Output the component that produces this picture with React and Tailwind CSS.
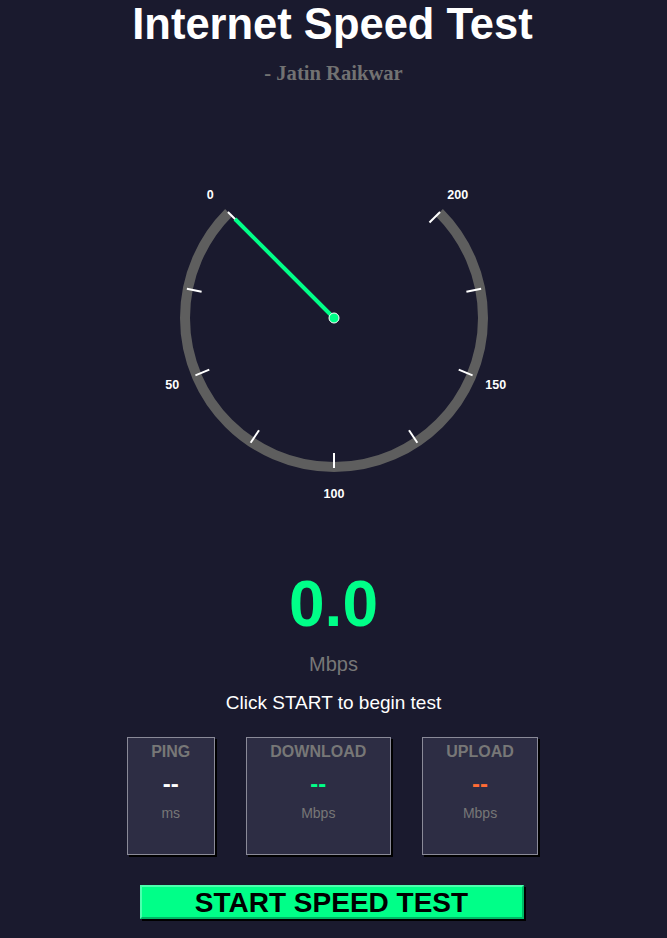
import React from "react";

const CX = 200;
const CY = 200;

function pt(r, deg) {
  const a = (deg * Math.PI) / 180;
  return [CX + r * Math.cos(a), CY - r * Math.sin(a)];
}

function Gauge({ value = 0 }) {
  const R = 149;
  const [sx, sy] = pt(R, 135);
  const [ex, ey] = pt(R, 45);
  const ticks = [];
  for (let v = 0; v <= 200; v += 25) {
    const deg = 135 + 1.35 * v;
    const [x1, y1] = pt(135, deg);
    const [x2, y2] = pt(150, deg);
    ticks.push(<line key={v} x1={x1} y1={y1} x2={x2} y2={y2} stroke="#ffffff" strokeWidth="2" />);
  }
  const labels = [0, 50, 100, 150, 200].map((v) => {
    const deg = 135 + 1.35 * v;
    const [x, y] = pt(175, deg);
    return (
      <text
        key={v}
        x={x}
        y={y + 4.5}
        textAnchor="middle"
        fill="#ffffff"
        fontSize="12.5"
        fontWeight="bold"
        fontFamily="'Liberation Sans', Arial, sans-serif"
      >
        {v}
      </text>
    );
  });
  const ndeg = 135 + 1.35 * value;
  const [nx, ny] = pt(140, ndeg);
  return (
    <svg width="400" height="400" viewBox="0 0 400 400" className="block">
      <path
        d={`M ${sx} ${sy} A ${R} ${R} 0 1 0 ${ex} ${ey}`}
        fill="none"
        stroke="#5e5e5e"
        strokeWidth="10"
      />
      {ticks}
      {labels}
      <line x1={CX} y1={CY} x2={nx} y2={ny} stroke="#00ff88" strokeWidth="4" />
      <circle cx={CX} cy={CY} r="5" fill="#00ff88" stroke="#ffffff" strokeWidth="1" />
    </svg>
  );
}

function Card({ title, valueColor, unit }) {
  return (
    <div className="h-[118px] px-[23.5px] pt-[4px] flex flex-col items-center bg-[#2d2d44] border border-[#8a8a98] shadow-[2px_2px_0_#000]">
      <div className="text-[16px] leading-[20px] font-bold text-[#777777]">{title}</div>
      <div className={`mt-[10px] text-[24px] leading-[24px] font-bold ${valueColor}`}>--</div>
      <div className="mt-[9px] text-[14px] leading-[16px] text-[#777777]">{unit}</div>
    </div>
  );
}

export default function App() {
  return (
    <div
      className="min-h-[938px] w-full bg-[#1a1a2e] flex flex-col items-center"
      style={{ fontFamily: "'Liberation Sans', Arial, sans-serif" }}
    >
      <h1 className="mt-[3px] mr-[2px] text-[43.5px] leading-[43px] font-bold text-white">Internet Speed Test</h1>
      <div
        className="mt-[17px] text-[20.6px] leading-[20px] font-bold text-[#727272]"
        style={{ fontFamily: "'Liberation Serif', 'Times New Roman', serif" }}
      >
        - Jatin Raikwar
      </div>
      <div className="mt-[35px]">
        <Gauge value={0} />
      </div>
      <div className="mt-[54px] text-[64px] leading-[64px] font-bold text-[#00ff88]">0.0</div>
      <div className="mt-[18px] text-[20px] leading-[20px] text-[#777777]">Mbps</div>
      <div className="mt-[19px] text-[19px] leading-[19px] text-white">Click START to begin test</div>
      <div className="mt-[25px] mr-[2px] flex gap-[31px]">
        <Card title="PING" valueColor="text-white" unit="ms" />
        <Card title="DOWNLOAD" valueColor="text-[#00ff88]" unit="Mbps" />
        <Card title="UPLOAD" valueColor="text-[#ff6b35]" unit="Mbps" />
      </div>
      <button className="mt-[30px] mr-[4px] w-[384px] h-[34px] pt-[2px] flex justify-center items-start bg-[#00ff88] border-2 border-t-[#4dffae] border-l-[#4dffae] border-r-[#00b866] border-b-[#00b866] shadow-[2px_2px_0_#000] text-black font-bold text-[28px] leading-[28px]">
        START SPEED TEST
      </button>
    </div>
  );
}
